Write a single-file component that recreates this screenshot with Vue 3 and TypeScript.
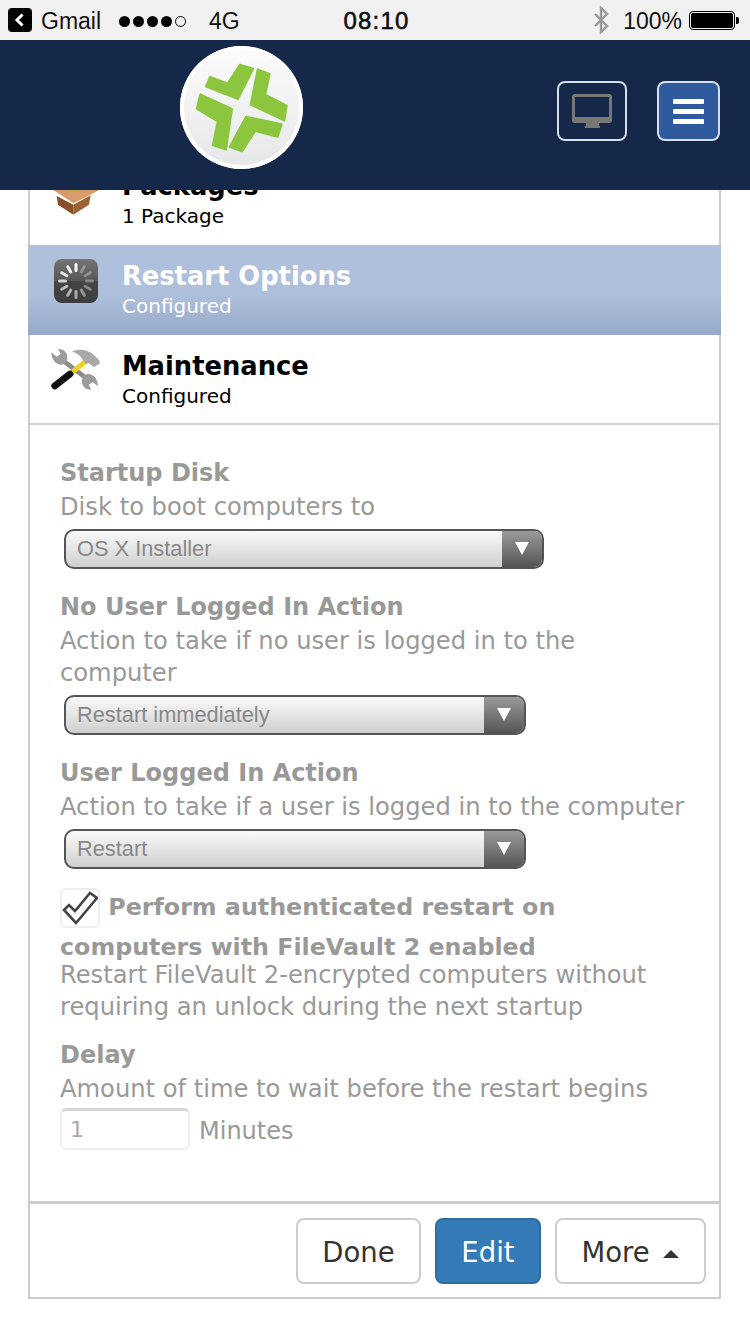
<script setup lang="ts">
const spinnerBars = [
  { a: 0, o: 0.95 }, { a: 30, o: 0.3 }, { a: 60, o: 0.3 }, { a: 90, o: 0.32 },
  { a: 120, o: 0.36 }, { a: 150, o: 0.45 }, { a: 180, o: 0.55 }, { a: 210, o: 0.6 },
  { a: 240, o: 0.65 }, { a: 270, o: 0.75 }, { a: 300, o: 0.85 }, { a: 330, o: 0.9 },
]
</script>

<template>
  <div class="screen">
    <div class="status-bar">
      <div class="status-left">
        <svg class="back-icon" width="24" height="24" viewBox="0 0 24 24">
          <rect width="24" height="24" rx="4" fill="#000" />
          <path d="M14.5 6.5 9 12l5.5 5.5" fill="none" stroke="#fff" stroke-width="3" />
        </svg>
        <span class="carrier">Gmail</span>
        <span class="signal">
          <i v-for="n in 4" :key="n" class="dot" />
          <i class="dot empty" />
        </span>
        <span class="network">4G</span>
      </div>
      <div class="status-time">08:10</div>
      <div class="status-right">
        <svg class="bt-icon" width="16" height="28" viewBox="0 0 16 28">
          <path d="M2 8l12 12-6 6V2l6 6L2 20" fill="none" stroke="#999" stroke-width="2.4" />
        </svg>
        <span class="battery-text">100%</span>
        <span class="battery"><i class="battery-fill" /></span>
        <i class="battery-tip" />
      </div>
    </div>

    <header class="topbar">
      <div class="logo">
        <svg width="123" height="123" viewBox="12 12 369 369">
          <g fill="#8cc63f" stroke="#8cc63f" stroke-width="6" stroke-linejoin="round">
            <path d="M192 68 232 80 186 171 90 134 102 105 155 124Z" />
            <path d="M245 82 281 96 268 158 332 191 325 236 224 188Z" />
            <path d="M317 247 305 284 238 267 198 328 161 315 210 224Z" />
            <path d="M73 157 168 201 150 323 110 310 125 238 62 200Z" />
          </g>
        </svg>
      </div>
      <div class="topbar-actions">
        <button class="nav-btn desktop">
          <svg width="40" height="34" viewBox="0 0 40 34">
            <path
              fill-rule="evenodd"
              d="M3 0h34a3 3 0 0 1 3 3v23a3 3 0 0 1-3 3H27v3h1v2H13v-2h1v-3H3a3 3 0 0 1-3-3V3a3 3 0 0 1 3-3Zm0 3v20h34V3Z"
              fill="#777"
            />
          </svg>
        </button>
        <button class="nav-btn menu">
          <i /><i /><i />
        </button>
      </div>
    </header>

    <main class="panel">
      <div class="row clipped">
        <div class="row-icon">
          <svg width="64" height="30" viewBox="0 12 192 90">
            <path d="M38 30 88 56V86L42 56Z" fill="#85502a" />
            <path d="M88 56 140 28 135 56 88 86Z" fill="#9c6233" />
            <path d="M28 12H165L140 26 88 52Z" fill="#d79c6c" />
            <path d="M72 12H112L92 22Z" fill="#c9a84a" />
          </svg>
        </div>
        <div class="row-text">
          <div class="row-title">Packages</div>
          <div class="row-sub">1 Package</div>
        </div>
      </div>
      <div class="row active">
        <div class="row-icon spin">
          <svg width="44" height="44" viewBox="0 0 44 44">
            <defs>
              <linearGradient id="spinBg" x1="0" y1="0" x2="0" y2="1">
                <stop offset="0" stop-color="#757575" />
                <stop offset="0.5" stop-color="#565656" />
                <stop offset="0.5" stop-color="#454545" />
                <stop offset="1" stop-color="#3d3d3d" />
              </linearGradient>
            </defs>
            <rect width="44" height="44" rx="8" fill="url(#spinBg)" />
            <rect
              v-for="b in spinnerBars"
              :key="b.a"
              x="20.5"
              y="4"
              width="3"
              height="9"
              rx="1.5"
              fill="#fff"
              :opacity="b.o"
              :transform="`rotate(${b.a} 22 22)`"
            />
          </svg>
        </div>
        <div class="row-text">
          <div class="row-title">Restart Options</div>
          <div class="row-sub">Configured</div>
        </div>
      </div>
      <div class="row last">
        <div class="row-icon tools">
          <svg width="64" height="60" viewBox="0 0 192 180">
            <defs>
              <path
                id="wrenchHead"
                d="M22 37 38 50 50 42 42 27C58 25 72 38 70 56 69 66 62 72 54 74 38 76 22 60 22 37Z"
              />
            </defs>
            <path d="M52 58 132 118" stroke="#8c8c8c" stroke-width="14" />
            <use href="#wrenchHead" fill="#9c9c9c" />
            <use href="#wrenchHead" fill="#9c9c9c" transform="rotate(180 92 88)" />
            <path d="M78 102 132 58" stroke="#f0d020" stroke-width="15" />
            <path d="M32 138 78 102" stroke="#111" stroke-width="20" stroke-linecap="round" />
            <path
              d="M84 34C105 24 135 30 150 45L165 60 168 70 150 82 135 70 125 72 108 48C100 42 92 38 84 34Z"
              fill="#a8a8a8"
            />
          </svg>
        </div>
        <div class="row-text">
          <div class="row-title">Maintenance</div>
          <div class="row-sub">Configured</div>
        </div>
      </div>

      <section class="form">
        <div class="label first">Startup Disk</div>
        <div class="hint">Disk to boot computers to</div>
        <div class="select wide">
          <span>OS X Installer</span>
          <i class="select-arrow" />
        </div>

        <div class="label">No User Logged In Action</div>
        <div class="hint">Action to take if no user is logged in to the computer</div>
        <div class="select">
          <span>Restart immediately</span>
          <i class="select-arrow" />
        </div>

        <div class="label">User Logged In Action</div>
        <div class="hint">Action to take if a user is logged in to the computer</div>
        <div class="select">
          <span>Restart</span>
          <i class="select-arrow" />
        </div>

        <div class="check-label">
          <span class="checkbox">
            <svg width="36" height="36" viewBox="0 0 36 36">
              <path
                d="M2 20 7 15 13 21 28 3 35 8 14 33Z"
                fill="#fff"
                stroke="#444"
                stroke-width="2.6"
                stroke-linejoin="miter"
              />
            </svg>
          </span>
          Perform authenticated restart on computers with FileVault 2 enabled
        </div>
        <div class="hint tight">Restart FileVault 2-encrypted computers without requiring an unlock during the next startup</div>

        <div class="label delay">Delay</div>
        <div class="hint">Amount of time to wait before the restart begins</div>
        <div class="delay-row">
          <div class="number-input">1</div>
          <span class="unit">Minutes</span>
        </div>
      </section>

      <footer class="actions">
        <button class="btn">Done</button>
        <button class="btn primary">Edit</button>
        <button class="btn more">More <i class="caret" /></button>
      </footer>
    </main>
  </div>
</template>

<style>
html,
body {
  margin: 0;
  background: #fff;
}
</style>

<style scoped>
.screen {
  width: 750px;
  height: 1334px;
  overflow: hidden;
  background: #fff;
  font-family: "DejaVu Sans", sans-serif;
}

.status-bar {
  height: 40px;
  background: #f1f1f1;
  display: grid;
  grid-template-columns: 1fr auto 1fr;
  align-items: center;
  font-family: "Liberation Sans", sans-serif;
  font-size: 23px;
  color: #111;
}

.status-left {
  display: flex;
  align-items: center;
  padding-left: 8px;
}

.carrier {
  margin-left: 9px;
  padding-top: 2px;
}

.signal {
  display: flex;
  gap: 3px;
  margin-left: 18px;
  padding-top: 2px;
}

.dot {
  width: 11px;
  height: 11px;
  border-radius: 50%;
  background: #000;
}

.dot.empty {
  background: none;
  border: 1px solid #000;
  box-sizing: border-box;
}

.network {
  margin-left: 23px;
  padding-top: 2px;
}

.status-time {
  font-size: 24px;
  font-weight: 500;
  letter-spacing: 1.2px;
  -webkit-text-stroke: 0.5px #000;
  padding: 2px 0 0 3px;
}

.status-right {
  display: flex;
  align-items: center;
  justify-content: flex-end;
  padding-right: 11px;
}

.bt-icon {
  margin-right: 14px;
}

.battery-text {
  margin-right: 7px;
  padding-top: 2px;
}

.battery {
  box-sizing: border-box;
  width: 46px;
  height: 19px;
  border: 1px solid #000;
  border-radius: 4px;
  padding: 1px;
  display: flex;
}

.battery-fill {
  flex: 1;
  background: #000;
  border-radius: 2px;
}

.battery-tip {
  width: 3px;
  height: 7px;
  margin-left: 1px;
  background: #000;
  border-radius: 0 2px 2px 0;
}

.topbar {
  position: relative;
  height: 150px;
  background: #152849;
  display: flex;
  justify-content: flex-end;
  padding: 41px 30px 0 0;
  box-sizing: border-box;
}

.logo {
  position: absolute;
  left: 180px;
  top: 6px;
  width: 123px;
  height: 123px;
  border-radius: 50%;
  background: linear-gradient(#fcfcfc, #e6e7e8);
  box-shadow: inset 0 0 0 4px #fff;
}

.logo svg {
  display: block;
}

.topbar-actions {
  display: flex;
  gap: 30px;
}

.nav-btn {
  height: 60px;
  border: 2px solid #d5deeb;
  border-radius: 8px;
  background: none;
  padding: 0;
  display: flex;
  flex-direction: column;
  align-items: center;
  justify-content: center;
}

.nav-btn.desktop {
  width: 70px;
}

.nav-btn.menu {
  width: 63px;
  background: #2f5a9e;
  gap: 5px;
}

.nav-btn.menu i {
  width: 31px;
  height: 5px;
  border-radius: 1px;
  background: #fff;
}

.panel {
  width: 693px;
  margin-left: 28px;
  box-sizing: border-box;
  border: solid #ccc;
  border-width: 0 2px 2px;
}

.row {
  height: 90px;
  box-sizing: border-box;
  display: flex;
  align-items: flex-start;
  color: #000;
  background: #fff;
}

.row.clipped {
  height: 55px;
  overflow: hidden;
  align-items: flex-end;
  padding-bottom: 15px;
}

.row.active {
  margin: 0 -2px;
  padding-left: 2px;
  background: linear-gradient(#afc0dc 0, #afc0dc 55%, #96a9c9 100%);
  color: #fff;
}

.row.last {
  border-bottom: 2px solid #d4d4d4;
}

.row-icon {
  width: 92px;
  flex: none;
  display: flex;
  justify-content: center;
  padding-top: 13px;
}

.row-icon svg {
  display: block;
}

.row-icon.spin {
  padding-top: 14px;
}

.row-icon.tools {
  padding-top: 5px;
}

.row.clipped .row-icon {
  padding-top: 0;
  align-self: flex-start;
}

.row-text {
  padding-top: 15px;
}

.row.clipped .row-text {
  padding-top: 0;
}

.row-title {
  font-size: 25.75px;
  font-weight: 700;
  line-height: 32px;
}

.row-sub {
  font-size: 20px;
  line-height: 28px;
}

.form {
  height: 776px;
  box-sizing: border-box;
  padding: 31px 30px 0;
  color: #999;
}

.label {
  font-size: 24px;
  font-weight: 700;
  line-height: 35px;
  margin-top: 21px;
}

.label.first {
  margin-top: 0;
}

.label.delay {
  margin-top: 15px;
}

.hint {
  font-size: 24.2px;
  line-height: 32px;
}

.select {
  width: 462px;
  height: 40px;
  margin: 6px 0 0 4px;
  box-sizing: border-box;
  border: 2px solid #555;
  border-radius: 10px;
  background: linear-gradient(#fafafa, #cfcfcf);
  position: relative;
  overflow: hidden;
  display: flex;
  align-items: center;
  padding-left: 11px;
  font-family: "Liberation Sans", sans-serif;
  font-size: 21.8px;
  color: #888;
}

.select.wide {
  width: 480px;
}

.select-arrow {
  position: absolute;
  right: 0;
  top: 0;
  bottom: 0;
  width: 40px;
  background: linear-gradient(#9a9a9a, #555);
}

.select-arrow::after {
  content: "";
  position: absolute;
  left: 13px;
  top: 11px;
  border-style: solid;
  border-width: 13px 7px 0;
  border-color: #fff transparent transparent;
}

.check-label {
  font-size: 23.75px;
  font-weight: 700;
  line-height: 40px;
  margin-top: 18px;
}

.checkbox {
  display: inline-block;
  width: 40px;
  height: 40px;
  box-sizing: border-box;
  border: 2px solid #eee;
  border-radius: 6px;
  vertical-align: middle;
  margin-top: -4px;
  transform: translateY(1px);
}

.checkbox svg {
  display: block;
}

.hint.tight {
  margin-top: -8px;
}

.delay-row {
  display: flex;
  align-items: center;
  gap: 9px;
  font-size: 24px;
  margin-top: 3px;
}

.unit {
  margin-top: 4px;
}

.number-input {
  width: 130px;
  height: 42px;
  box-sizing: border-box;
  border: 2px solid #eee;
  border-top: 3px solid #d6d6d6;
  border-radius: 6px;
  padding-left: 8px;
  font-size: 22px;
  line-height: 38px;
  color: #aaa;
}

.actions {
  border-top: 3px solid #ccc;
  height: 96px;
  box-sizing: border-box;
  display: flex;
  justify-content: flex-end;
  gap: 14px;
  padding: 14px 13px 0 0;
}

.btn {
  height: 66px;
  width: 125px;
  box-sizing: border-box;
  border: 2px solid #ccc;
  border-radius: 8px;
  background: #fff;
  padding: 2px 0 0;
  font-family: "DejaVu Sans", sans-serif;
  font-size: 27.5px;
  color: #333;
}

.btn.primary {
  width: 106px;
  background: #337ab7;
  border-color: #2e6da4;
  color: #fff;
}

.btn.more {
  width: 151px;
}

.caret {
  display: inline-block;
  margin-left: 5px;
  vertical-align: middle;
  border-style: solid;
  border-width: 0 8px 8px;
  border-color: transparent transparent #333;
}
</style>
